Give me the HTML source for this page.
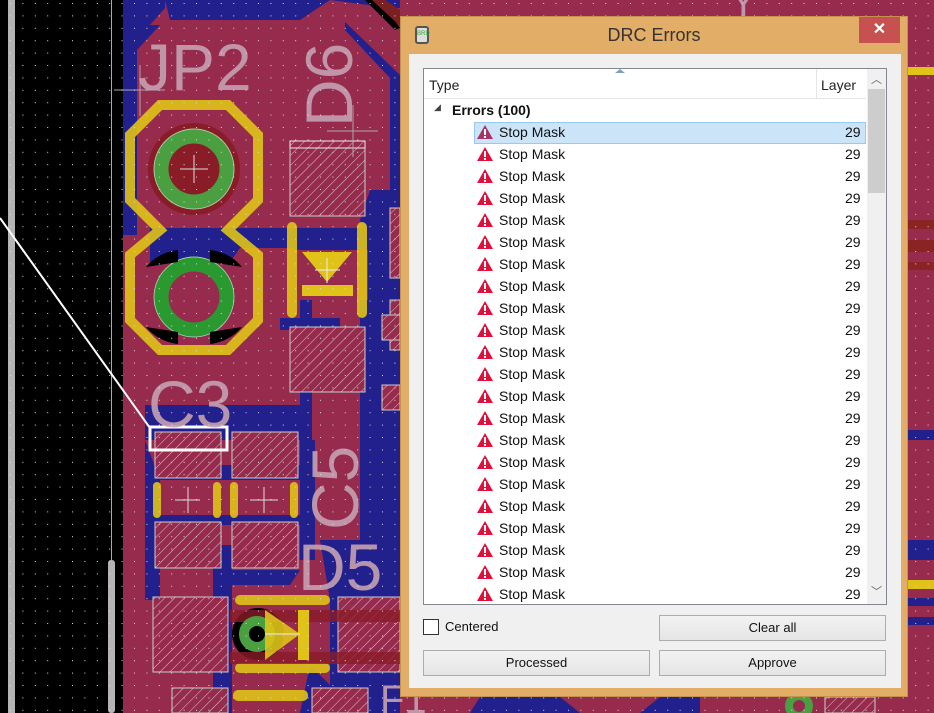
<!DOCTYPE html>
<html><head><meta charset="utf-8"><style>
*{margin:0;padding:0;box-sizing:border-box}
body{width:934px;height:713px;overflow:hidden;position:relative;background:#000;font-family:"Liberation Sans",sans-serif}
svg.bg{position:absolute;left:0;top:0}
.dlg{position:absolute;left:400px;top:16px;width:508px;height:681px;background:#e2ad66;border:1px solid #c4914e}
.title{position:absolute;left:0;top:0;width:100%;height:37px;text-align:center;font-size:18px;line-height:37px;color:#333}
.close{position:absolute;left:458px;top:0;width:41px;height:26px;background:#c75050;color:#fff;text-align:center;font-size:16px;line-height:26px;font-weight:bold}
.ico{position:absolute;left:14px;top:9px;width:14px;height:18px;border:2px solid #555;border-radius:3px;background:#ddd;font-size:6px;color:#3a3;line-height:12px;text-align:center}
.client{position:absolute;left:8px;top:37px;width:492px;height:634px;background:#f0f0f0}
.list{position:absolute;left:14px;top:14px;width:464px;height:537px;background:#fff;border:1px solid #828790;overflow:hidden}
.hdr{position:absolute;left:0;top:0;width:442px;height:30px;border-bottom:1px solid #e5e5e5;font-size:14px;color:#222}
.hdr .t{position:absolute;left:5px;top:8px}
.hdr .l{position:absolute;left:397px;top:8px}
.hdr .sep{position:absolute;left:392px;top:0;width:1px;height:30px;background:#e5e5e5}
.hdr .arr{position:absolute;left:191px;top:0;width:0;height:0;border-left:5px solid transparent;border-right:5px solid transparent;border-bottom:4px solid #7aa0c0}
.sb{position:absolute;left:443px;top:0;width:19px;height:535px;background:#f0f0f0}
.thumb{position:absolute;left:1px;top:20px;width:17px;height:104px;background:#cdcdcd}
.sb .a{position:absolute;left:0;width:19px;text-align:center;font-size:11px;color:#606060}
.row{position:absolute;left:0;width:442px;height:22px;font-size:14px;color:#111}
.row .n{position:absolute;left:75px;top:2px}
.row .v{position:absolute;left:421px;top:2px}
.row svg{position:absolute;left:52px;top:2px}
.sel{background:#cce4f7;border:1px solid #99c9ef}
.cb{position:absolute;left:14px;top:565px;width:16px;height:16px;border:1px solid #333;background:#fff}
.cbl{position:absolute;left:36px;top:565px;font-size:13px;color:#111}
.btn{position:absolute;height:26px;border:1px solid #adadad;background:linear-gradient(#f2f2f2,#e5e5e5);font-size:13px;text-align:center;line-height:24px;color:#111}
</style></head><body>
<svg class="bg" width="934" height="713" viewBox="0 0 934 713">
<defs>
<pattern id="dots" x="10" y="3" width="12.4" height="12.4" patternUnits="userSpaceOnUse"><rect x="0" y="0" width="1" height="1" fill="#ddd"/></pattern>
<pattern id="hatch" width="7" height="7" patternUnits="userSpaceOnUse" patternTransform="rotate(45)"><rect width="7" height="7" fill="#962b4d"/><line x1="0" y1="0" x2="0" y2="7" stroke="#d9c6cf" stroke-width="1"/></pattern>
</defs>
<rect x="0" y="0" width="123" height="713" fill="#000"/>
<rect x="8" y="0" width="7" height="713" fill="#b4b4b4"/>
<rect x="111" y="0" width="1" height="560" fill="#aaa"/>
<rect x="108" y="560" width="7" height="153" rx="3" fill="#b4b4b4"/>
<rect x="123" y="0" width="811" height="713" fill="#962b4d"/>
<!-- blue traces -->
<g fill="#22208c">
<path d="M123 0 H165 L165 8 L150 25 H123 Z"/>
<path d="M165 0 H330 L300 20 L170 20 Z"/>
<path d="M330 0 H400 V8 L392 8 Z"/>
<rect x="123" y="25" width="14" height="210"/>
<path d="M137 25 H160 L137 50Z"/>
<path d="M345 22 L400 75 V230 L385 230 L390 195 V78 L345 30 Z"/>
<path d="M150 228 H400 V250 H300 L290 248 H240 L230 262 H150 Z"/>
<path d="M370 190 L400 190 V330 L380 330 L368 305 L368 250 L360 220 Z"/>
<rect x="360" y="300" width="40" height="413"/>
<path d="M280 318 H340 V330 L320 330 H280 Z"/>
<path d="M300 300 H312 V440 L300 440 Z"/>
<path d="M145 405 H300 V440 H145 Z"/>
<path d="M145 465 H300 V480 H145 Z"/>
<path d="M145 515 H300 V525 H145 Z"/>
<path d="M145 440 V600 L160 600 L160 480 Z"/>
<path d="M213 545 H232 V713 H213 Z"/>
<path d="M300 440 H315 V560 H300 Z"/>
<path d="M232 570 H300 L290 585 H232 Z"/>
<path d="M320 540 H360 V713 H330 L330 600 Z"/>
<path d="M310 665 L345 700 L345 713 H300 Z"/>
<rect x="908" y="540" width="26" height="20"/>
<rect x="908" y="598" width="26" height="8"/>
<rect x="908" y="617" width="26" height="8"/>
<path d="M908 430 L934 430 V440 H908 Z"/>
</g>
<path d="M365 0 L395 30 L400 28 L380 0 Z" fill="#000"/>
<path d="M372 0 L400 26 V10 L385 0 Z" fill="#7a2020"/>
<rect x="908" y="67" width="26" height="8" fill="#dfc318"/>
<rect x="908" y="220" width="26" height="9" fill="#8a2424"/>
<rect x="908" y="240" width="26" height="12" fill="#8a2424"/>
<rect x="908" y="262" width="26" height="8" fill="#8a2424"/>
<rect x="908" y="580" width="26" height="9" fill="#dfc318"/>
<path d="M480 697 H560 L580 713 H470 Z" fill="#22208c"/>
<path d="M660 697 H700 V713 H640 Z" fill="#22208c"/>
<circle cx="799" cy="706" r="14" fill="#4aa040"/>
<circle cx="799" cy="706" r="6" fill="#962b4d"/>
<rect x="825" y="697" width="50" height="16" fill="url(#hatch)" stroke="#ccc"/>
<!-- JP2 -->
<circle cx="194" cy="169" r="46" fill="#8a1c28"/>
<path d="M160 105 H228 L258 135 V200 L228 230 L258 255 V320 L228 350 H160 L130 320 V255 L160 230 L130 200 V135 Z" fill="none" stroke="#dfc318" stroke-width="10" opacity="0.9"/>
<circle cx="194" cy="169" r="33" fill="none" stroke="#4aa040" stroke-width="15"/>
<circle cx="194" cy="169" r="40" fill="none" stroke="#ccc" stroke-width="0.7"/>
<circle cx="194" cy="297" r="33" fill="none" stroke="#2a9a30" stroke-width="15"/>
<circle cx="194" cy="297" r="40" fill="none" stroke="#ccc" stroke-width="0.7"/>
<path d="M146 267 A48 48 0 0 1 178 250 L178 262 Z M242 267 A48 48 0 0 0 210 250 L210 262 Z M146 327 A48 48 0 0 0 178 344 L178 332 Z M242 327 A48 48 0 0 1 210 344 L210 332Z" fill="#000"/>
<line x1="180" y1="169" x2="208" y2="169" stroke="#ddd"/><line x1="194" y1="155" x2="194" y2="183" stroke="#ddd"/>
<g fill="url(#hatch)" stroke="#ccc" stroke-width="1">
<rect x="290" y="141" width="75" height="75"/>
<rect x="290" y="327" width="75" height="65"/>
<rect x="390" y="208" width="10" height="70"/><rect x="390" y="300" width="10" height="50"/>
<rect x="155" y="432" width="66" height="46"/>
<rect x="232" y="432" width="66" height="46"/>
<rect x="155" y="522" width="66" height="46"/>
<rect x="232" y="522" width="66" height="46"/>
<rect x="153" y="597" width="75" height="75"/>
<rect x="338" y="597" width="62" height="75"/>
<rect x="172" y="688" width="56" height="25"/>
<rect x="312" y="688" width="56" height="25"/>
<rect x="382" y="315" width="18" height="25"/><rect x="382" y="385" width="18" height="25"/>
</g>
<rect x="290" y="141" width="75" height="7" fill="none" stroke="#eee"/>
<rect x="287" y="222" width="10" height="96" rx="5" fill="#dfc318" opacity="0.9"/>
<rect x="357" y="222" width="10" height="96" rx="5" fill="#dfc318" opacity="0.9"/>
<path d="M302 252 H352 L327 282 Z" fill="#dfc318"/>
<rect x="302" y="285" width="51" height="11" fill="#dfc318"/>
<line x1="315" y1="270" x2="340" y2="270" stroke="#eee"/><line x1="327" y1="258" x2="327" y2="283" stroke="#eee"/>
<g fill="#dfc318" opacity="0.9">
<rect x="153" y="482" width="8" height="36" rx="4"/><rect x="213" y="482" width="8" height="36" rx="4"/>
<rect x="230" y="482" width="8" height="36" rx="4"/><rect x="290" y="482" width="8" height="36" rx="4"/>
<rect x="235" y="595" width="95" height="10" rx="5"/>
<rect x="235" y="663" width="95" height="10" rx="5"/>
<rect x="233" y="690" width="75" height="11" rx="5"/>
</g>
<g stroke="#ddd"><line x1="175" y1="500" x2="200" y2="500"/><line x1="188" y1="487" x2="188" y2="513"/><line x1="250" y1="500" x2="278" y2="500"/><line x1="264" y1="487" x2="264" y2="513"/></g>
<rect x="150" y="427" width="77" height="23" fill="none" stroke="#fff" stroke-width="3"/>
<circle cx="258" cy="634" r="26" fill="#000"/>
<rect x="230" y="610" width="170" height="12" fill="#8a1c28" opacity="0.8"/>
<rect x="230" y="652" width="170" height="12" fill="#8a1c28" opacity="0.8"/>
<circle cx="257" cy="634" r="13" fill="none" stroke="#4aa040" stroke-width="10"/>
<path d="M265 610 L300 634 L265 660 Z" fill="#dfc318" opacity="0.9"/>
<rect x="298" y="610" width="11" height="50" fill="#dfc318"/>
<line x1="265" y1="634" x2="300" y2="634" stroke="#eee"/>
<line x1="0" y1="218" x2="150" y2="428" stroke="#fff" stroke-width="2"/>
<line x1="114" y1="90" x2="165" y2="90" stroke="#aaa"/><line x1="140" y1="65" x2="140" y2="116" stroke="#aaa"/>
<line x1="327" y1="131" x2="378" y2="131" stroke="#aaa"/><line x1="353" y1="105" x2="353" y2="157" stroke="#aaa"/>
<g fill="#c7a2b3" font-family="Liberation Sans,sans-serif" opacity="0.9">
<text x="138" y="90" font-size="66">JP2</text>
<text x="352" y="127" font-size="66" transform="rotate(-90 352 127)">D6</text>
<text x="148" y="427" font-size="66">C3</text>
<text x="358" y="530" font-size="66" transform="rotate(-90 358 530)">C5</text>
<text x="298" y="590" font-size="66">D5</text>
<text x="380" y="713" font-size="40">F1</text>
<text x="730" y="16" font-size="40">Y</text>
</g>
<rect x="0" y="0" width="934" height="713" fill="url(#dots)"/>
</svg>

<div class="dlg">
 <div class="ico">BRD</div>
 <div class="title">DRC Errors</div>
 <div class="close">✕</div>
 <div class="client">
  <div class="list">
   <div class="hdr"><div class="arr"></div><span class="t">Type</span><div class="sep"></div><span class="l">Layer</span></div>
   <div class="sb"><div class="a" style="top:2px">︿</div><div class="thumb"></div><div class="a" style="top:514px">﹀</div></div>
   <div class="row" style="top:31px"><span style="position:absolute;left:10px;top:2px;font-size:9px;color:#444">◢</span><span class="n" style="left:28px;font-weight:bold">Errors (100)</span></div>
   <div id="rows"></div>
  </div>
  <div class="cb"></div><div class="cbl">Centered</div>
  <div class="btn" style="left:250px;top:561px;width:227px">Clear all</div>
  <div class="btn" style="left:14px;top:596px;width:227px">Processed</div>
  <div class="btn" style="left:250px;top:596px;width:227px">Approve</div>
 </div>
</div>
<script>
var h='';
for(var i=0;i<22;i++){
 var y=53+i*22, s=i==0;
 h+='<div class="row'+(s?' sel':'')+'" style="top:'+y+'px;'+(s?'left:50px;width:392px':'')+'">'+
 '<svg width="18" height="16" style="'+(s?'left:1px;top:1px':'')+'"><path d="M9 1 L17 15 H1 Z" fill="'+(s?'#a8336a':'#e0103a')+'"/><rect x="8" y="5" width="2" height="6" fill="#fff"/><rect x="8" y="12" width="2" height="2" fill="#fff"/></svg>'+
 '<span class="n" style="'+(s?'left:24px;top:1px':'')+'">Stop Mask</span><span class="v" style="'+(s?'left:370px;top:1px':'')+'">29</span></div>';
}
document.getElementById('rows').innerHTML=h;
</script>
</body></html>
